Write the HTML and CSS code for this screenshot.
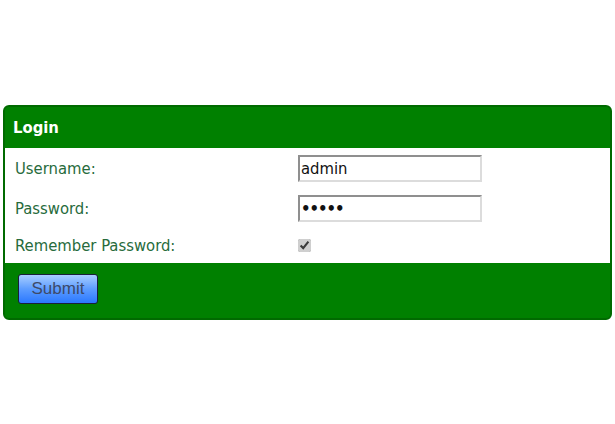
FILE: index.html
```html
<!DOCTYPE html>
<html lang="en">
<head>
    <meta charset="UTF-8">
    <title>Login</title>
    <link rel="stylesheet" href="styles.css">
</head>
<body>
    <form class="login-panel">
        <div class="login-header">Login</div>
        <div class="login-body">
            <label class="field-label" for="username">Username:</label>
            <div class="field-cell"><input type="text" id="username" class="text-input" value="admin"></div>
            <label class="field-label" for="password">Password:</label>
            <div class="field-cell"><input type="password" id="password" class="text-input pass-input" value="admin"></div>
            <label class="field-label short" for="remember">Remember Password:</label>
            <div class="field-cell"><input type="checkbox" id="remember" class="check-input" checked></div>
        </div>
        <div class="login-footer">
            <button type="button" class="submit-button">Submit</button>
        </div>
    </form>
</body>
</html>
```

FILE: styles.css
```css
* {
    margin: 0;
    padding: 0;
    box-sizing: border-box;
}

body {
    background: #fff;
    font-family: 'DejaVu Sans Condensed', 'DejaVu Sans', sans-serif;
    font-size: 16.5px;
}

/* Panel */
.login-panel {
    margin: 105px 3px 0 3px;
    border: 2px solid #006a00;
    border-radius: 6px;
    background: #008000;
    overflow: hidden;
}

.login-header {
    height: 41px;
    padding: 11px 0 0 8px;
    color: #fff;
    font-weight: bold;
    font-size: 16.5px;
}

/* Body rows */
.login-body {
    background: #fff;
    display: grid;
    grid-template-columns: 293px 1fr;
}

.field-label {
    color: #276b3c;
    padding-left: 10px;
    display: flex;
    align-items: center;
    height: 40px;
}

.field-label.short {
    height: 35px;
}

.field-cell {
    display: flex;
    align-items: center;
}

.text-input {
    width: 184px;
    height: 27px;
    border: 2px solid #dcdcdc;
    border-top-color: #8f8f8f;
    border-left-color: #8f8f8f;
    padding: 0 1px;
    font-family: 'DejaVu Sans Condensed', 'DejaVu Sans', sans-serif;
    font-size: 16.5px;
    color: #111;
    background: #fff;
}

.pass-input {
    font-weight: bold;
    letter-spacing: -1px;
}

.check-input {
    width: 13px;
    height: 13px;
    margin: 0;
    accent-color: #cfcfcf;
}

/* Footer */
.login-footer {
    height: 55px;
    padding: 11px 0 0 13px;
}

.submit-button {
    width: 80px;
    height: 30px;
    border: 1px solid #1a1f3a;
    border-radius: 3px;
    background: linear-gradient(180deg, #a8ceff 0%, #5c9cff 50%, #2a78ff 100%);
    color: #3d4a6a;
    font-family: 'Liberation Sans', Arial, sans-serif;
    font-size: 17px;
}
```
